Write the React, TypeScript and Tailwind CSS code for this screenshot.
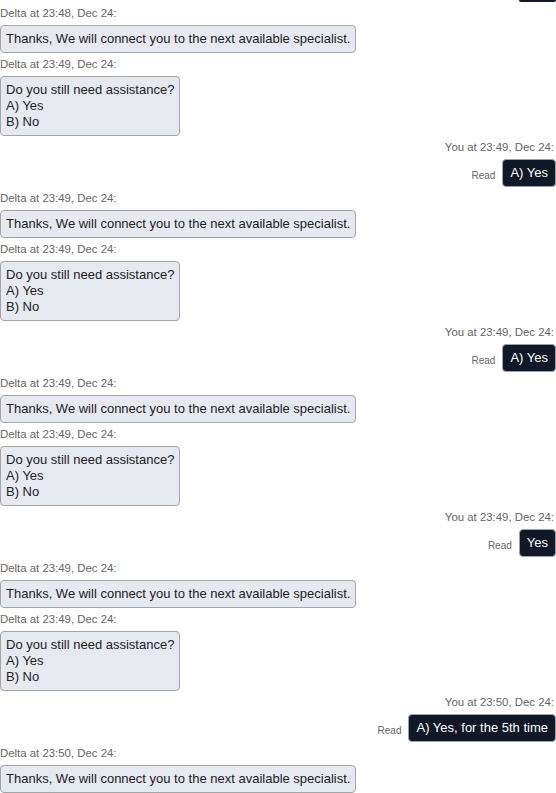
type Sender = "delta" | "you";

interface Message {
  from: Sender;
  time: string;
  lines: string[];
}

const thanks = "Thanks, We will connect you to the next available specialist.";
const assist = ["Do you still need assistance?", "A) Yes", "B) No"];

const messages: Message[] = [
  { from: "delta", time: "23:48, Dec 24", lines: [thanks] },
  { from: "delta", time: "23:49, Dec 24", lines: assist },
  { from: "you", time: "23:49, Dec 24", lines: ["A) Yes"] },
  { from: "delta", time: "23:49, Dec 24", lines: [thanks] },
  { from: "delta", time: "23:49, Dec 24", lines: assist },
  { from: "you", time: "23:49, Dec 24", lines: ["A) Yes"] },
  { from: "delta", time: "23:49, Dec 24", lines: [thanks] },
  { from: "delta", time: "23:49, Dec 24", lines: assist },
  { from: "you", time: "23:49, Dec 24", lines: ["Yes"] },
  { from: "delta", time: "23:49, Dec 24", lines: [thanks] },
  { from: "delta", time: "23:49, Dec 24", lines: assist },
  { from: "you", time: "23:50, Dec 24", lines: ["A) Yes, for the 5th time"] },
  { from: "delta", time: "23:50, Dec 24", lines: [thanks] },
];

const ChatItem = ({ msg }: { msg: Message }) => {
  if (msg.from === "you") {
    return (
      <div className="flex flex-col items-end">
        <div className="pt-[4px] pr-[2px] mb-[5px] text-[11.4px] leading-[14px] text-[#666]">
          You at {msg.time}:
        </div>
        <div className="flex items-end gap-[7px]">
          <span className="mb-[5px] text-[10px] leading-[12px] text-[#666]">Read</span>
          <div className="rounded-[4px] border border-[#9ca3af] bg-[#111827] px-[7px] py-[5px] text-[13px] leading-[16px] text-white">
            {msg.lines.map((l) => (
              <div key={l}>{l}</div>
            ))}
          </div>
        </div>
      </div>
    );
  }
  return (
    <div className="flex flex-col items-start">
      <div className="pt-[4px] mb-[5px] text-[11.4px] leading-[14px] text-[#666]">
        Delta at {msg.time}:
      </div>
      <div className="rounded-[4px] border border-[#a3a3a3] bg-[#e7e9f0] px-[5px] py-[5px] text-[13px] leading-[16px] text-[#222]">
        {msg.lines.map((l) => (
          <div key={l}>{l}</div>
        ))}
      </div>
    </div>
  );
};

export default function App() {
  return (
    <div
      className="flex h-[793px] w-[556px] flex-col overflow-hidden bg-white"
      style={{ fontFamily: '"Liberation Sans", Arial, sans-serif' }}
    >
      {/* tail of the previous reply, scrolled off the top */}
      <div className="h-[2px] w-[37px] self-end rounded-b-[2px] bg-[#111827]" />
      {messages.map((m, i) => (
        <ChatItem key={i} msg={m} />
      ))}
    </div>
  );
}
